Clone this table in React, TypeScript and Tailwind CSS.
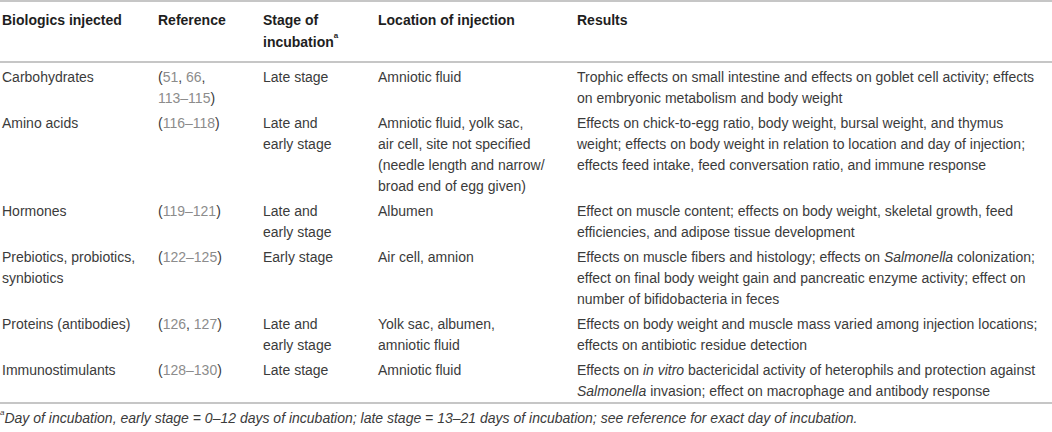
import type { ReactNode } from 'react'

const Ref = ({ n }: { n: string }) => <span className="text-[#8c8c8c]">{n}</span>
const I = ({ children }: { children: ReactNode }) => <i>{children}</i>

type Row = {
  name: ReactNode[]
  ref: ReactNode[]
  stage: ReactNode[]
  loc: ReactNode[]
  res: ReactNode[]
}

const rows: Row[] = [
  {
    name: ['Carbohydrates'],
    ref: [<>(<Ref n="51" />, <Ref n="66" />,</>, <><Ref n="113–115" />)</>],
    stage: ['Late stage'],
    loc: ['Amniotic fluid'],
    res: [
      'Trophic effects on small intestine and effects on goblet cell activity; effects',
      'on embryonic metabolism and body weight',
    ],
  },
  {
    name: ['Amino acids'],
    ref: [<>(<Ref n="116–118" />)</>],
    stage: ['Late and', 'early stage'],
    loc: ['Amniotic fluid, yolk sac,', 'air cell, site not specified', '(needle length and narrow/', 'broad end of egg given)'],
    res: [
      'Effects on chick-to-egg ratio, body weight, bursal weight, and thymus',
      'weight; effects on body weight in relation to location and day of injection;',
      'effects feed intake, feed conversation ratio, and immune response',
    ],
  },
  {
    name: ['Hormones'],
    ref: [<>(<Ref n="119–121" />)</>],
    stage: ['Late and', 'early stage'],
    loc: ['Albumen'],
    res: [
      'Effect on muscle content; effects on body weight, skeletal growth, feed',
      'efficiencies, and adipose tissue development',
    ],
  },
  {
    name: ['Prebiotics, probiotics,', 'synbiotics'],
    ref: [<>(<Ref n="122–125" />)</>],
    stage: ['Early stage'],
    loc: ['Air cell, amnion'],
    res: [
      <>Effects on muscle fibers and histology; effects on <I>Salmonella</I> colonization;</>,
      'effect on final body weight gain and pancreatic enzyme activity; effect on',
      'number of bifidobacteria in feces',
    ],
  },
  {
    name: ['Proteins (antibodies)'],
    ref: [<>(<Ref n="126" />, <Ref n="127" />)</>],
    stage: ['Late and', 'early stage'],
    loc: ['Yolk sac, albumen,', 'amniotic fluid'],
    res: [
      'Effects on body weight and muscle mass varied among injection locations;',
      'effects on antibiotic residue detection',
    ],
  },
  {
    name: ['Immunostimulants'],
    ref: [<>(<Ref n="128–130" />)</>],
    stage: ['Late stage'],
    loc: ['Amniotic fluid'],
    res: [
      <>Effects on <I>in vitro</I> bactericidal activity of heterophils and protection against</>,
      <><I>Salmonella</I> invasion; effect on macrophage and antibody response</>,
    ],
  },
]

const cols = 'grid grid-cols-[156px_105px_115px_199px_1fr]'

function Cell({ lines }: { lines: ReactNode[] }) {
  return (
    <div className="flex flex-col">
      {lines.map((l, i) => (
        <span key={i} className="whitespace-nowrap">
          {l}
        </span>
      ))}
    </div>
  )
}

export default function App() {
  return (
    <div
      className="w-[1052px] h-[432px] overflow-hidden bg-white text-[14px] text-[#3b3b3b]"
      style={{ fontFamily: '"Liberation Sans", Arial, sans-serif' }}
    >
      <div className="border-t-2 border-[#c6c6c6]" />
      <div className={`${cols} pl-[2px] pt-[7px] pb-[8px] border-b-2 border-[#c6c6c6] font-bold text-[#1e1e1e] leading-[22px]`}>
        <div>Biologics injected</div>
        <div>Reference</div>
        <div>
          Stage of
          <br />
          incubation<sup className="text-[8px] font-bold align-[5px]">a</sup>
        </div>
        <div>Location of injection</div>
        <div>Results</div>
      </div>
      <div className="flex flex-col leading-[21px]">
        {rows.map((r, i) => (
          <div key={i} className={`${cols} pl-[2px] pt-[4px]`}>
            <Cell lines={r.name} />
            <Cell lines={r.ref} />
            <Cell lines={r.stage} />
            <Cell lines={r.loc} />
            <Cell lines={r.res} />
          </div>
        ))}
      </div>
      <div className="border-t-2 border-[#c6c6c6] pt-[5px] italic text-[14px] leading-[19px] text-[#3b3b3b]">
        <sup className="text-[8px] align-[4px]">a</sup>
        Day of incubation, early stage = 0–12 days of incubation; late stage = 13–21 days of incubation; see reference for exact day of incubation.
      </div>
    </div>
  )
}
